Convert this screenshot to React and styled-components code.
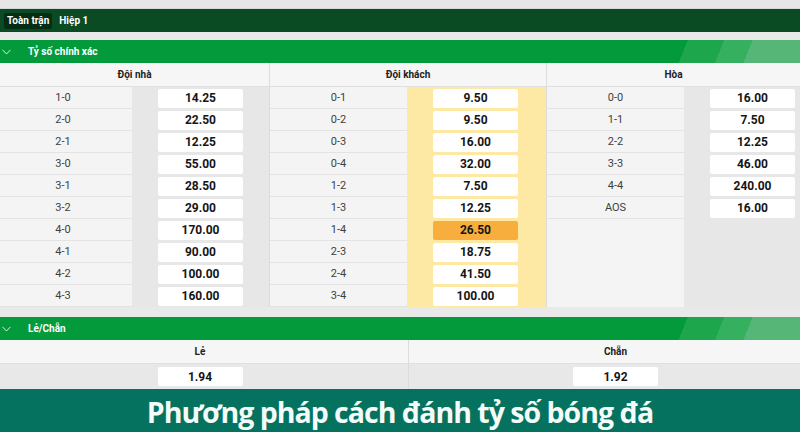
import React from 'react'
import styled, { createGlobalStyle } from 'styled-components'

const GlobalStyle = createGlobalStyle`
  * { box-sizing: border-box; }
  body {
    margin: 0;
    font-family: Roboto, "Noto Sans", "Liberation Sans", sans-serif;
    background: #ececec;
  }
`

const scoreHome = [
  ['1-0', '14.25'], ['2-0', '22.50'], ['2-1', '12.25'], ['3-0', '55.00'], ['3-1', '28.50'],
  ['3-2', '29.00'], ['4-0', '170.00'], ['4-1', '90.00'], ['4-2', '100.00'], ['4-3', '160.00'],
]
const scoreAway = [
  ['0-1', '9.50'], ['0-2', '9.50'], ['0-3', '16.00'], ['0-4', '32.00'], ['1-2', '7.50'],
  ['1-3', '12.25'], ['1-4', '26.50', true], ['2-3', '18.75'], ['2-4', '41.50'], ['3-4', '100.00'],
]
const scoreDraw = [
  ['0-0', '16.00'], ['1-1', '7.50'], ['2-2', '12.25'], ['3-3', '46.00'], ['4-4', '240.00'], ['AOS', '16.00'],
]

const columns = [
  { title: 'Đội nhà', rows: scoreHome, width: 269, labelWidth: 132, labelShift: 6 },
  { title: 'Đội khách', rows: scoreAway, width: 277, labelWidth: 137, yellow: true },
  { title: 'Hòa', rows: scoreDraw, width: 254, labelWidth: 137 },
]

const Chevron = () => (
  <svg width="9" height="6" viewBox="0 0 9 6">
    <polyline points="0.5,0.8 4.5,5 8.5,0.8" fill="none" stroke="#d9f2e0" strokeWidth="1" />
  </svg>
)

const App = () => {
  return (
    <Page>
      <GlobalStyle />
      <TopStrip />
      <TabBar>
        <Tab $active>Toàn trận</Tab>
        <Tab>Hiệp 1</Tab>
      </TabBar>
      <Spacer $h={8} />

      <SectionHeader>
        <Chevron />
        <span>Tỷ số chính xác</span>
      </SectionHeader>
      <Market>
        {columns.map((col) => (
          <Column key={col.title} $w={col.width}>
            <ColumnHead>{col.title}</ColumnHead>
            {col.rows.map(([label, odds, picked]) => (
              <Row key={label} $labelW={col.labelWidth}>
                <Label $shift={col.labelShift}>{label}</Label>
                <OddsArea $yellow={col.yellow}>
                  <OddsBox $picked={picked}>{odds}</OddsBox>
                </OddsArea>
              </Row>
            ))}
            <Filler $labelW={col.labelWidth}>
              <div />
              <OddsArea $yellow={col.yellow} />
            </Filler>
          </Column>
        ))}
      </Market>

      <Spacer $h={10} />
      <SectionHeader>
        <Chevron />
        <span>Lẻ/Chẵn</span>
      </SectionHeader>
      <OddEven>
        <OddEvenCol>
          <ColumnHead>Lẻ</ColumnHead>
          <OddEvenOdds><OddsBox>1.94</OddsBox></OddEvenOdds>
        </OddEvenCol>
        <OddEvenCol>
          <ColumnHead>Chẵn</ColumnHead>
          <OddEvenOdds><OddsBox>1.92</OddsBox></OddEvenOdds>
        </OddEvenCol>
      </OddEven>

      <Banner>Phương pháp cách đánh tỷ số bóng đá</Banner>
    </Page>
  )
}

export default App

const Page = styled.div`
  width: 800px;
  height: 432px;
  overflow: hidden;
  display: flex;
  flex-direction: column;
  background: #e9e9e9;
`

const TopStrip = styled.div`
  height: 9px;
  background: #e6e6e6;
  border-bottom: 1px solid #d6d6d6;
`

const TabBar = styled.div`
  height: 23px;
  background: #0a4b23;
  display: flex;
  align-items: center;
  padding-left: 4px;
  gap: 4px;
`

const Tab = styled.div`
  height: 16px;
  padding: 0 3px;
  display: flex;
  align-items: center;
  font-size: 10px;
  font-weight: 700;
  color: #fff;
  border-radius: 2px;
  background: ${(p) => (p.$active ? '#052d15' : 'transparent')};
`

const Spacer = styled.div`
  height: ${(p) => p.$h}px;
  background: #e9e9e9;
  flex-shrink: 0;
`

const SectionHeader = styled.div`
  height: 23px;
  flex-shrink: 0;
  display: flex;
  align-items: center;
  gap: 17px;
  padding-left: 2px;
  font-size: 10px;
  font-weight: 700;
  color: #fff;
  background: linear-gradient(
    112deg,
    #029a3b 0,
    #029a3b 85%,
    #1ea64d 85%,
    #1ea64d 89.5%,
    #34b05f 89.5%,
    #34b05f 93%,
    #55b678 93%
  );
`

const Market = styled.div`
  display: flex;
  flex-shrink: 0;
`

const Column = styled.div`
  width: ${(p) => p.$w}px;
  flex-shrink: 0;
  display: flex;
  flex-direction: column;
  height: 244px;
  & + & {
    border-left: 1px solid #dcdcdc;
  }
`

const ColumnHead = styled.div`
  height: 24px;
  flex-shrink: 0;
  display: flex;
  align-items: center;
  justify-content: center;
  font-size: 10px;
  font-weight: 700;
  color: #222;
  background: #f6f6f6;
  border-bottom: 1px solid #e0e0e0;
`

const Row = styled.div`
  height: 22px;
  display: grid;
  grid-template-columns: ${(p) => p.$labelW}px 1fr;
  background: #f4f4f4;
`

const Label = styled.div`
  display: flex;
  align-items: center;
  justify-content: center;
  padding-right: ${(p) => p.$shift || 0}px;
  font-size: 11px;
  color: #3f3f3f;
  border-bottom: 1px solid #e3e3e3;
`

const OddsArea = styled.div`
  display: flex;
  align-items: center;
  padding-left: 26px;
  background: ${(p) => (p.$yellow ? '#fde9a4' : '#e7e7e7')};
`

const OddsBox = styled.div`
  width: 85px;
  height: 19px;
  border-radius: 2px;
  display: flex;
  align-items: center;
  justify-content: center;
  font-size: 12px;
  font-weight: 700;
  color: #151515;
  background: ${(p) => (p.$picked ? '#f8ae3d' : '#fff')};
`

const Filler = styled.div`
  flex: 1;
  display: grid;
  grid-template-columns: ${(p) => p.$labelW}px 1fr;
  background: #f4f4f4;
`

const OddEven = styled.div`
  display: grid;
  grid-template-columns: 408px 414px;
  flex-shrink: 0;
`

const OddEvenCol = styled.div`
  display: flex;
  flex-direction: column;
  &:first-child > * {
    padding-right: 8px;
  }
  & + & {
    border-left: 1px solid #dcdcdc;
  }
`

const OddEvenOdds = styled.div`
  height: 25px;
  display: flex;
  align-items: center;
  justify-content: center;
  background: #e8e8e8;
`

const Banner = styled.div`
  flex: 1;
  display: flex;
  align-items: center;
  justify-content: center;
  padding-top: 2px;
  background: #04725f;
  color: #f4fbf8;
  font-family: "Open Sans", "Noto Sans", sans-serif;
  font-size: 28.5px;
  font-weight: 700;
  letter-spacing: -1px;
`
